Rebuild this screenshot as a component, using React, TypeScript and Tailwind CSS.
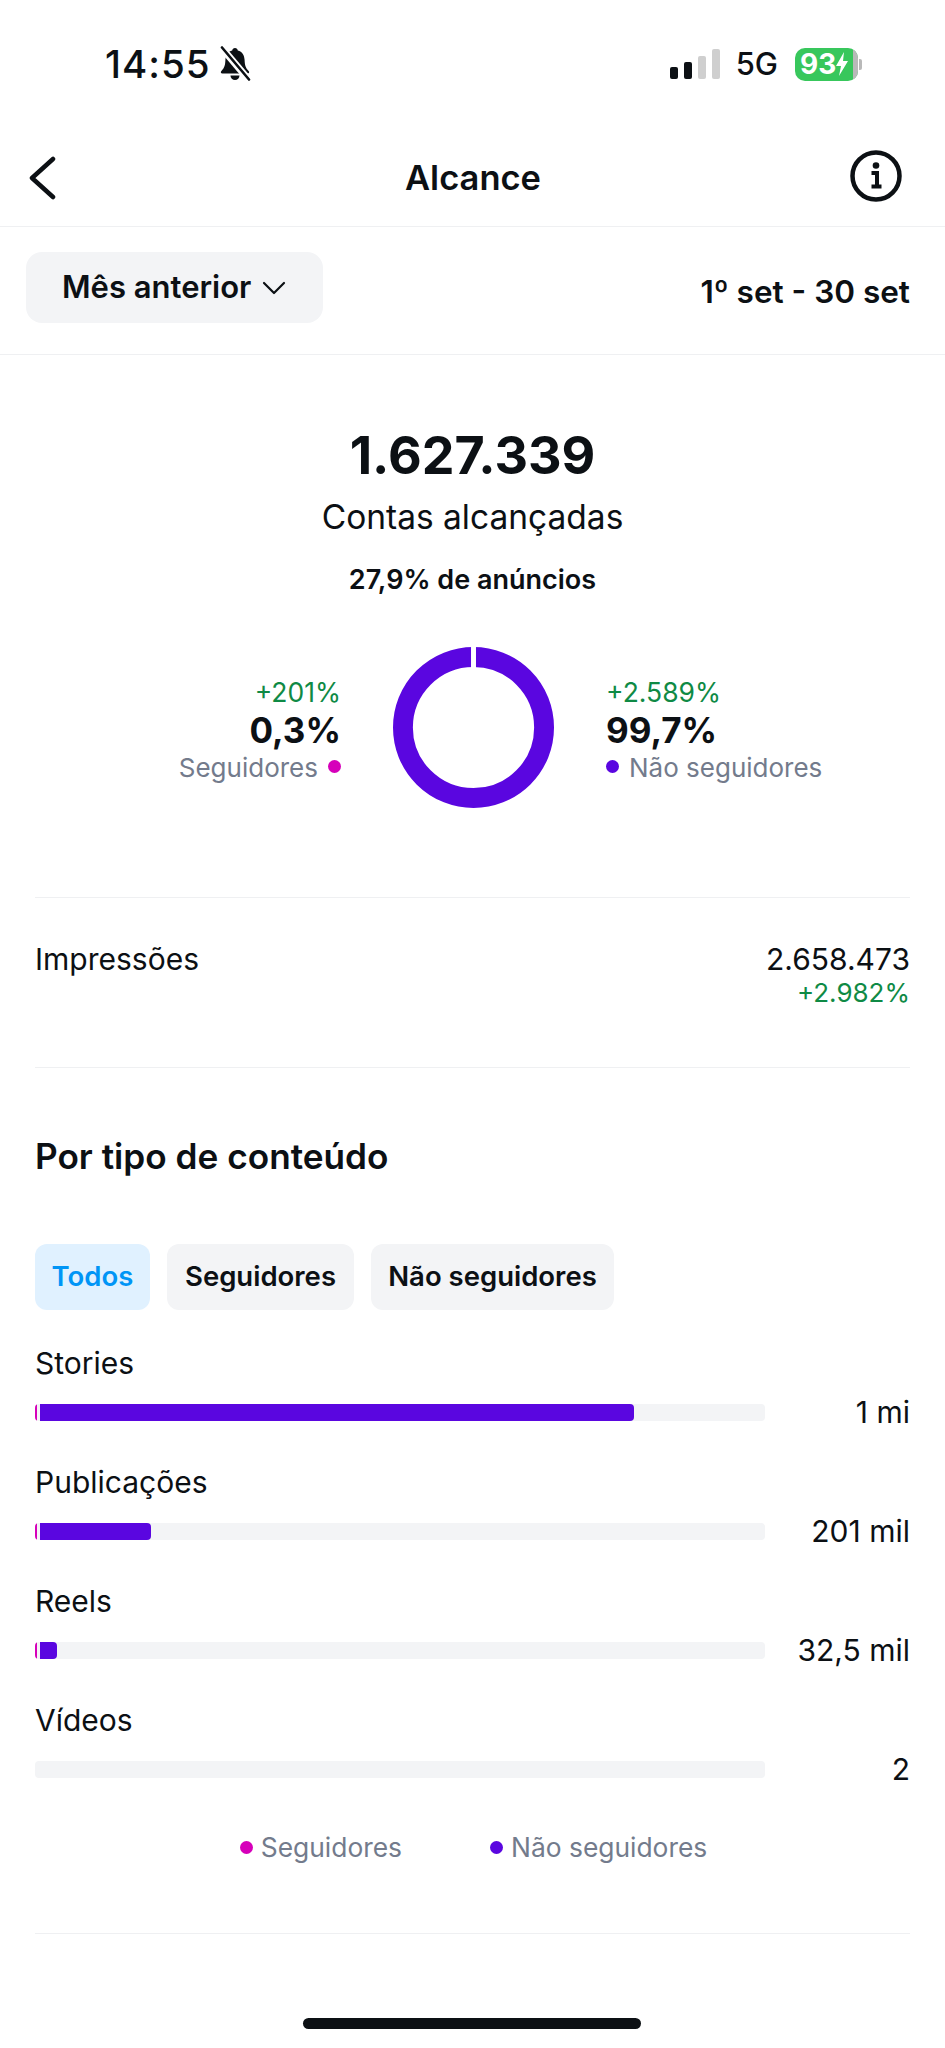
const font = { fontFamily: 'Inter, "Liberation Sans", sans-serif' };

function BellOff() {
  return (
    <svg width="32" height="36" viewBox="0 0 32 36" className="ml-[8px]">
      <path d="M16 2c-1.600 0-2.600 1-2.800 2.400C8.600 5.600 6.600 9.400 6.400 14c-.2 5-1 8-4 11-1 1-.6 2.600 1 2.600h25.200c1.600 0 2-1.600 1-2.600-3-3-3.800-6-4-11-.2-4.600-2.200-8.400-6.800-9.600C18.600 3 17.600 2 16 2z" fill="#0c1014" />
      <path d="M11.500 29.500h9a4.500 4.500 0 0 1-9 0z" fill="#0c1014" />
      <path d="M2 1l28 33" stroke="#fff" strokeWidth="7" />
      <path d="M3 1.500l27 32" stroke="#0c1014" strokeWidth="2.600" strokeLinecap="round" />
    </svg>
  );
}

function StatusBar() {
  return (
    <div className="flex h-[128px] items-start justify-between pt-[46px] pl-[105px] pr-[83px]">
      <div className="flex items-center h-[36px]">
        <span className="text-[38.5px] leading-[36px] font-medium tracking-[1px] text-[#0c1014]">14:55</span>
        <BellOff />
      </div>
      <div className="flex items-center h-[36px]">
        <div className="flex items-end gap-[6px] h-[30px]">
          <div className="w-[8px] h-[12px] rounded-[2px] bg-[#0c1014]" />
          <div className="w-[8px] h-[17px] rounded-[2px] bg-[#0c1014]" />
          <div className="w-[8px] h-[23px] rounded-[2px] bg-[#cfcfcf]" />
          <div className="w-[8px] h-[30px] rounded-[2px] bg-[#cfcfcf]" />
        </div>
        <span className="ml-[16px] text-[31px] leading-[36px] font-medium text-[#0c1014]">5G</span>
        <div className="ml-[17px] flex items-center">
          <div className="relative flex h-[33px] w-[63px] items-center overflow-hidden rounded-[10px] bg-[#38c75c] pl-[5px]">
            <span className="text-[28px] leading-[33px] font-bold text-white">93</span>
            <svg width="14" height="26" viewBox="0 0 14 26" className="ml-[-1px]">
              <path d="M9 1L1 15h5l-2 10 9-15H8z" fill="#fff" />
            </svg>
            <div className="absolute right-0 top-0 h-full w-[5px] bg-[#b9b9b9]" />
          </div>
          <div className="ml-[1px] h-[11px] w-[3px] rounded-r-[2px] bg-[#b9b9b9]" />
        </div>
      </div>
    </div>
  );
}

function Bar({ label, value, width }: { label: string; value: string; width: number }) {
  return (
    <div className="h-[119px]">
      <div className="text-[30px] leading-[36px] text-[#0c1014]">{label}</div>
      <div className="mt-[13px] flex items-center justify-between">
        <div className="relative h-[17px] w-[730px] overflow-hidden rounded-[4px] bg-[#f3f4f6]">
          {width > 0 && (
            <>
              <div className="absolute left-0 top-0 h-full w-[2px] bg-[#d600ba]" />
              <div
                className="absolute left-[5px] top-0 h-full rounded-r-[4px] bg-[#5a06e0]"
                style={{ width }}
              />
            </>
          )}
        </div>
        <span className="text-[30px] leading-[36px] text-[#0c1014]">{value}</span>
      </div>
    </div>
  );
}

function Dot({ color }: { color: string }) {
  return <span className={`inline-block h-[13px] w-[13px] rounded-full ${color}`} />;
}

export default function App() {
  return (
    <div className="relative h-[2048px] w-[945px] overflow-hidden bg-white" style={font}>
      <StatusBar />

      {/* header */}
      <div className="flex h-[99px] items-start border-b border-[#eff0f2] pl-[29px] pr-[43px]">
        <div className="flex-1">
          <svg width="28" height="44" viewBox="0 0 28 44" className="mt-[28px]">
            <path d="M24 3L3 22l21 19" fill="none" stroke="#0c1014" strokeWidth="4.500" strokeLinecap="round" strokeLinejoin="round" />
          </svg>
        </div>
        <span className="ml-[15px] mt-[30px] text-[34.5px] leading-[40px] font-semibold text-[#0c1014]">Alcance</span>
        <div className="flex flex-1 justify-end">
          <svg width="52" height="52" viewBox="0 0 52 52" className="mt-[22px]">
            <circle cx="26" cy="26" r="23.500" fill="none" stroke="#0c1014" strokeWidth="4.500" />
            <circle cx="26" cy="15.500" r="3.300" fill="#0c1014" />
            <path d="M21.500 23h5.500v12.500M21.500 36.500h10" fill="none" stroke="#0c1014" strokeWidth="4" />
          </svg>
        </div>
      </div>

      {/* period */}
      <div className="flex h-[128px] items-start justify-between border-b border-[#eff0f2] pl-[26px] pr-[35px] pt-[25px]">
        <div className="flex h-[71px] w-[297px] items-center rounded-[16px] bg-[#f3f4f6] pl-[36px]">
          <span className="text-[31px] font-semibold text-[#0c1014]">Mês anterior</span>
          <svg width="24" height="14" viewBox="0 0 24 14" className="ml-[11px]">
            <path d="M2 2l10 10L22 2" fill="none" stroke="#0c1014" strokeWidth="2.200" strokeLinecap="round" strokeLinejoin="round" />
          </svg>
        </div>
        <span className="mt-[22px] text-[31.5px] leading-[36px] font-semibold text-[#0c1014]">1º set - 30 set</span>
      </div>

      {/* totals */}
      <div className="mx-[35px] flex h-[543px] flex-col items-center border-b border-[#eff0f2]">
        <div className="mt-[66px] text-[52px] leading-[70px] font-bold text-[#0c1014]">1.627.339</div>
        <div className="mt-[4px] text-[33.5px] leading-[44px] text-[#0c1014]">Contas alcançadas</div>
        <div className="mt-[23px] text-[27px] leading-[36px] font-semibold text-[#0c1014]">27,9% de anúncios</div>
        <div className="mt-[49px] flex w-full items-center">
          <div className="flex w-[306px] flex-col items-end pt-[6px]">
            <span className="text-[26.5px] leading-[30px] text-[#0f8a45]">+201%</span>
            <span className="mt-[2px] text-[35px] leading-[42px] font-bold text-[#0c1014]">0,3%</span>
            <span className="flex items-center gap-[10px] text-[26px] leading-[34px] text-[#737b8c]">
              Seguidores
              <Dot color="bg-[#d600ba] mb-[2px]" />
            </span>
          </div>
          <svg width="161" height="161" viewBox="0 0 162 162" className="ml-[52px]">
            <circle cx="81" cy="81" r="71" fill="none" stroke="#5a06e0" strokeWidth="20" />
            <rect x="78.500" y="0" width="5" height="22" fill="#fff" />
          </svg>
          <div className="ml-[52px] flex flex-col items-start pt-[6px]">
            <span className="text-[26.5px] leading-[30px] text-[#0f8a45]">+2.589%</span>
            <span className="mt-[2px] text-[35px] leading-[42px] font-bold text-[#0c1014]">99,7%</span>
            <span className="flex items-center gap-[10px] text-[26px] leading-[34px] text-[#737b8c]">
              <Dot color="bg-[#5a06e0] mb-[2px]" />
              Não seguidores
            </span>
          </div>
        </div>
      </div>

      {/* impressions */}
      <div className="mx-[35px] flex h-[170px] items-start justify-between border-b border-[#eff0f2] pt-[43px]">
        <span className="text-[30px] leading-[36px] text-[#0c1014]">Impressões</span>
        <div className="flex flex-col items-end">
          <span className="text-[30px] leading-[36px] text-[#0c1014]">2.658.473</span>
          <span className="text-[26px] leading-[32px] text-[#0f8a45]">+2.982%</span>
        </div>
      </div>

      {/* content type */}
      <div className="mx-[35px] h-[865px] pt-[65px]">
        <div className="text-[35.2px] leading-[46px] font-semibold text-[#0c1014]">Por tipo de conteúdo</div>
        <div className="mt-[65px] flex gap-[17px]">
          <div className="flex h-[66px] w-[115px] items-center justify-center rounded-[12px] bg-[#e0f1ff] text-[27.5px] font-semibold text-[#0095f6]">Todos</div>
          <div className="flex h-[66px] w-[187px] items-center justify-center rounded-[12px] bg-[#f3f4f6] text-[27.5px] font-semibold text-[#0c1014]">Seguidores</div>
          <div className="flex h-[66px] w-[243px] items-center justify-center rounded-[12px] bg-[#f3f4f6] text-[27.5px] font-semibold text-[#0c1014]">Não seguidores</div>
        </div>
        <div className="mt-[35px]">
          <Bar label="Stories" value="1 mi" width={594} />
          <Bar label="Publicações" value="201 mil" width={111} />
          <Bar label="Reels" value="32,5 mil" width={17} />
          <Bar label="Vídeos" value="2" width={0} />
        </div>
        <div className="mt-[9px] flex items-center justify-center gap-[88px] pl-[2px] text-[26.4px] leading-[34px] text-[#737b8c]">
          <span className="flex items-center gap-[8px]">
            <Dot color="bg-[#d600ba]" />
            Seguidores
          </span>
          <span className="flex items-center gap-[8px]">
            <Dot color="bg-[#5a06e0]" />
            Não seguidores
          </span>
        </div>
      </div>

      <div className="mx-[35px] border-b border-[#eff0f2]" />

      {/* home indicator */}
      <div className="absolute bottom-[19px] left-[303px] h-[11px] w-[338px] rounded-full bg-[#0c1014]" />
    </div>
  );
}
